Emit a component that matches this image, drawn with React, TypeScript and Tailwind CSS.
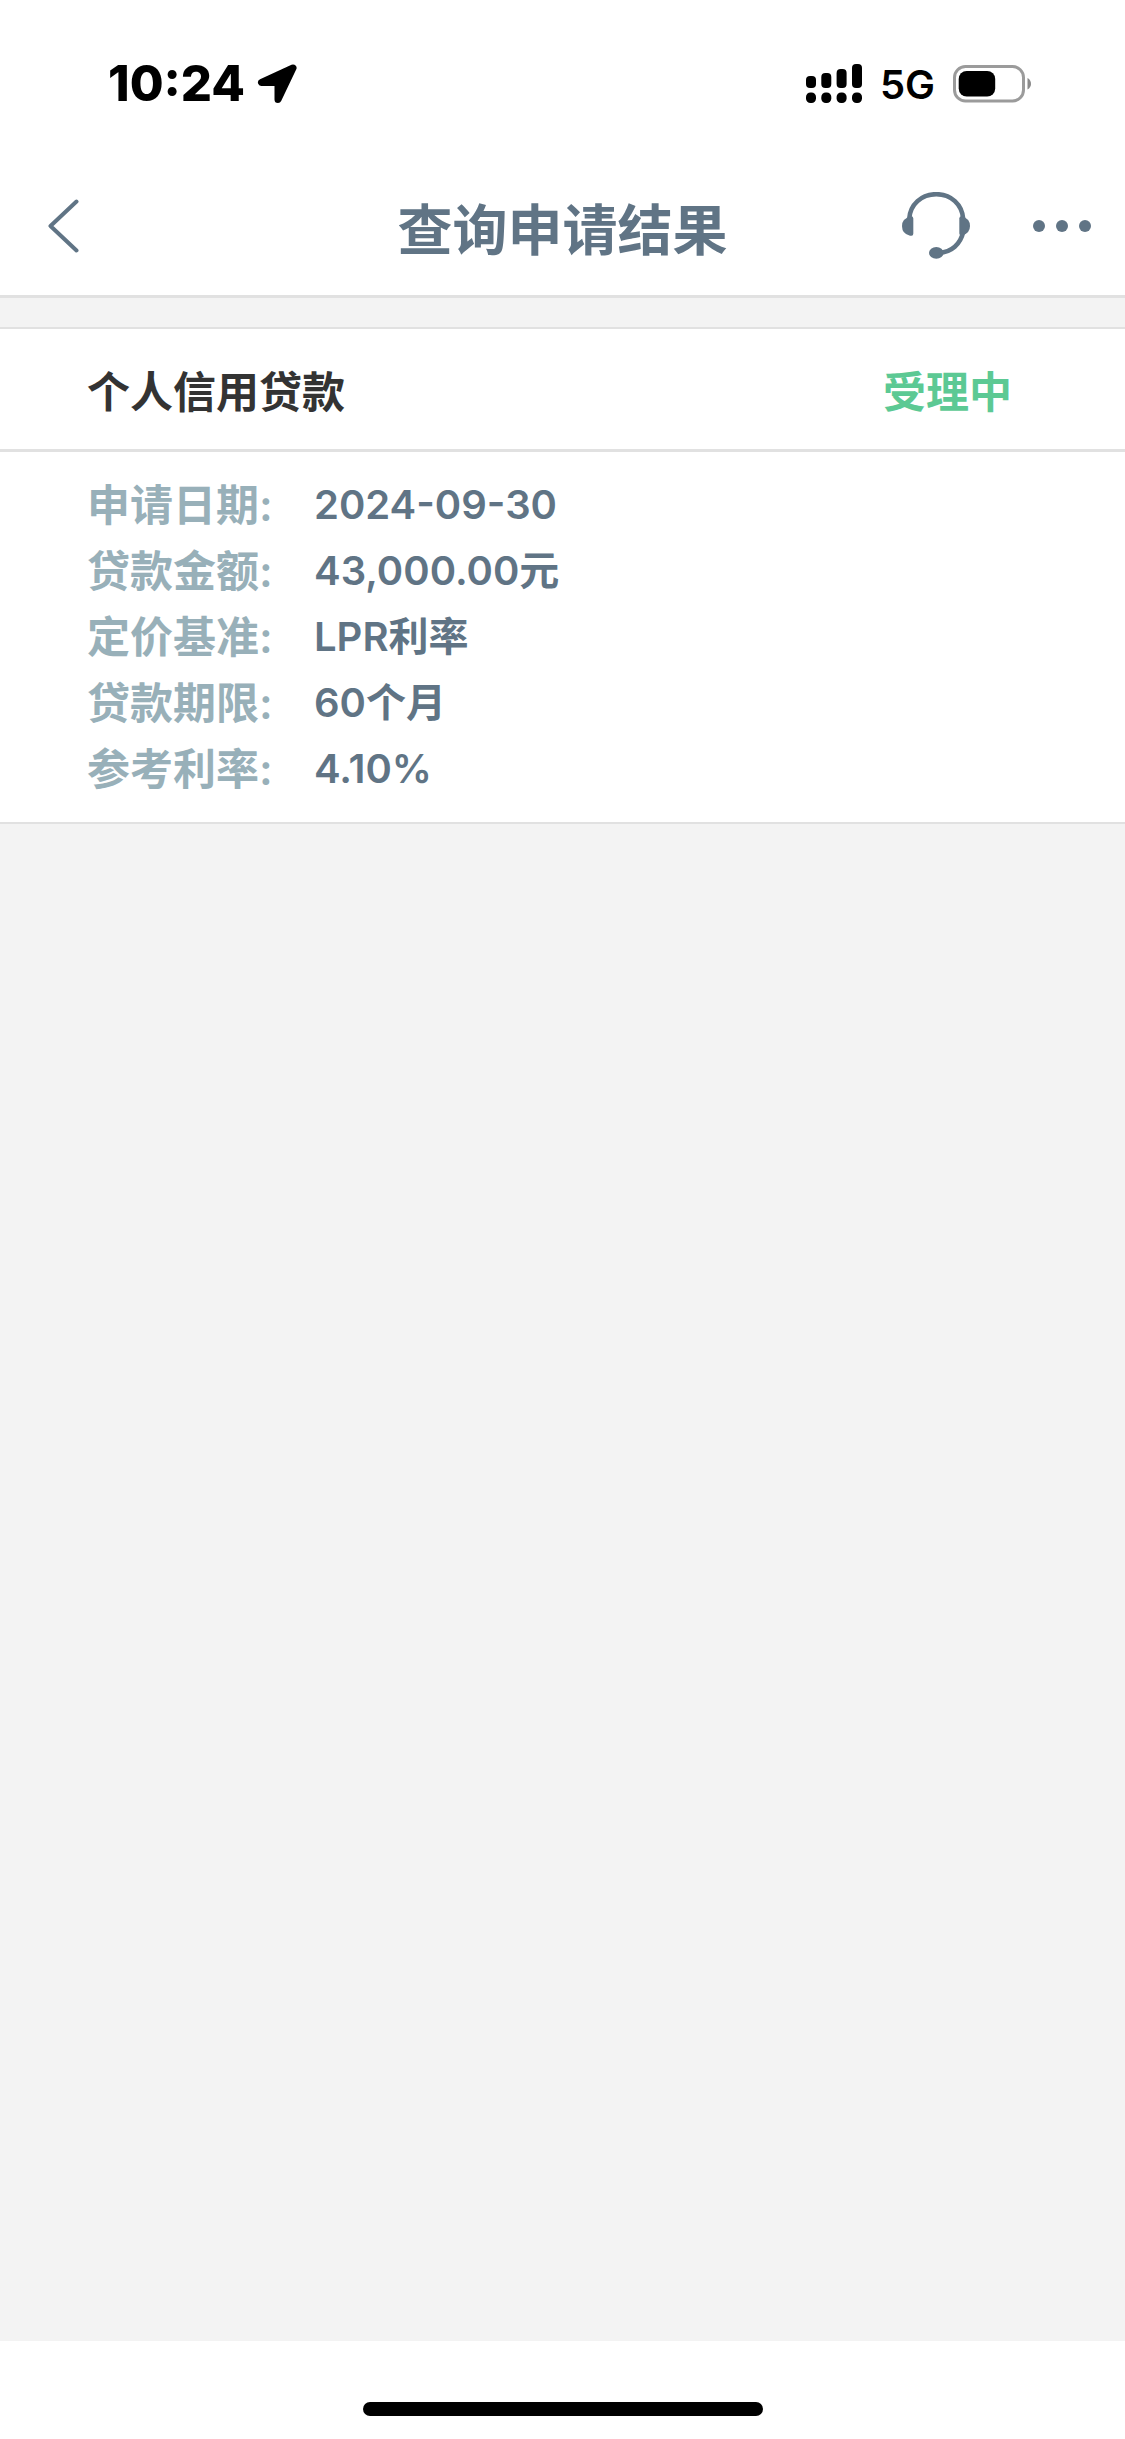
const details = [
  { label: '申请日期:', value: '2024-09-30' },
  { label: '贷款金额:', value: '43,000.00元' },
  { label: '定价基准:', value: 'LPR利率' },
  { label: '贷款期限:', value: '60个月' },
  { label: '参考利率:', value: '4.10%' },
];

function StatusBar() {
  return (
    <div className="flex h-[156px] items-center justify-between pt-3 pl-[108px] pr-[94px] text-black">
      <div className="flex items-center gap-3">
        <span className="text-[49px] leading-[60px] font-extrabold">10:24</span>
        <svg className="h-10 w-10" viewBox="0 0 40 40" fill="currentColor" stroke="currentColor" strokeWidth="7" strokeLinejoin="round">
          <path d="M36 4 L4.5 18.5 H21 V35.5 Z" />
        </svg>
      </div>
      <div className="flex items-center gap-[18px]">
        <svg className="h-10 w-14" viewBox="0 0 56 40" fill="currentColor">
          <rect x="0" y="12" width="10" height="12" rx="4" />
          <rect x="15.3" y="9" width="10" height="15" rx="4" />
          <rect x="30.6" y="5" width="10" height="19" rx="4" />
          <rect x="46" y="0" width="10" height="24" rx="4" />
          <rect x="0" y="28.5" width="10" height="10.5" rx="4.5" />
          <rect x="15.3" y="28.5" width="10" height="10.5" rx="4.5" />
          <rect x="30.6" y="28.5" width="10" height="10.5" rx="4.5" />
          <rect x="46" y="28.5" width="10" height="10.5" rx="4.5" />
        </svg>
        <span className="pt-0.5 text-[40px] leading-[48px] font-semibold">5G</span>
        <svg className="h-[38px] w-[78px]" viewBox="0 0 78 38">
          <rect x="1.5" y="1.5" width="69" height="34.5" rx="11" fill="none" stroke="#9b9b9b" strokeWidth="3" />
          <rect x="5.7" y="6" width="36.5" height="25.5" rx="8" fill="#000" />
          <path d="M74.5 13 Q78 15 78 18.7 Q78 22.5 74.5 24.5 Z" fill="#8a8a8a" />
        </svg>
      </div>
    </div>
  );
}

function Header() {
  return (
    <header className="grid h-[142px] grid-cols-[1fr_auto_1fr] items-center border-b-[3px] border-[#e1e1e1] px-[34px] text-[#607485]">
      <button type="button" aria-label="返回" className="justify-self-start pl-[14px]">
        <svg className="h-14 w-8" viewBox="0 0 32 56" fill="none" stroke="currentColor" strokeWidth="4" strokeLinecap="round" strokeLinejoin="round">
          <path d="M28.5 3.5 L2.5 28 L28.5 52.5" />
        </svg>
      </button>
      <h1 className="pt-2 text-[55px] leading-[72px] font-semibold">查询申请结果</h1>
      <div className="flex items-center gap-[63px] justify-self-end">
        <button type="button" aria-label="客服">
          <svg className="h-[68px] w-[68px]" viewBox="0 0 68 68" fill="currentColor">
            <path
              d="M7.2 27 C8 12.5 19.5 2.2 34.3 2.2 C49 2.2 60.2 12.5 61.2 27 M61.2 40 C58.5 52 49.5 60.3 37 60.8"
              fill="none"
              stroke="currentColor"
              strokeWidth="4.6"
            />
            <path d="M11.3 26.5 Q11.3 24.3 9 24.3 Q0 26.5 0 34 Q0 42 8 43.7 H9.5 Q11.3 43.7 11.3 41.5 Z" />
            <path d="M57.3 26.5 Q57.3 24.3 59.6 24.3 Q68 26.5 68 34 Q68 41.5 60 43.5 Q57.3 43.7 57.3 41.5 Z" />
            <ellipse cx="34.3" cy="60.8" rx="7.3" ry="5.9" />
          </svg>
        </button>
        <button type="button" aria-label="更多">
          <svg className="h-3 w-[58px]" viewBox="0 0 58 12" fill="currentColor">
            <circle cx="6" cy="6" r="6" />
            <circle cx="29" cy="6" r="6" />
            <circle cx="52" cy="6" r="6" />
          </svg>
        </button>
      </div>
    </header>
  );
}

export default function App() {
  return (
    <div className="flex min-h-screen flex-col bg-white font-['Inter','Noto_Sans_CJK_SC',sans-serif]" lang="zh-CN">
      <StatusBar />
      <Header />
      <main className="flex-1 bg-[#f3f3f3] pt-[29px]">
        <section className="border-y-2 border-[#e1e1e1] bg-white">
          <div className="flex h-[123px] items-center justify-between border-b-[3px] border-[#e1e1e1] pt-1.5 pr-[113px] pl-[87px] text-[43px] leading-[66px] font-semibold">
            <h2 className="text-[#333333]">个人信用贷款</h2>
            <span className="text-[#5cc994]">受理中</span>
          </div>
          <dl className="py-5 pl-[87px] leading-[66px] font-semibold">
            {details.map((item) => (
              <div key={item.label} className="flex h-[66px]">
                <dt className="w-[227px] text-[43px] text-[#98b0b9]">{item.label}</dt>
                <dd className="text-[40px] text-[#607485]">{item.value}</dd>
              </div>
            ))}
          </dl>
        </section>
      </main>
      <footer className="flex h-[98px] items-end justify-center bg-white pb-[23px]">
        <div className="h-[14px] w-[400px] rounded-full bg-black" />
      </footer>
    </div>
  );
}
